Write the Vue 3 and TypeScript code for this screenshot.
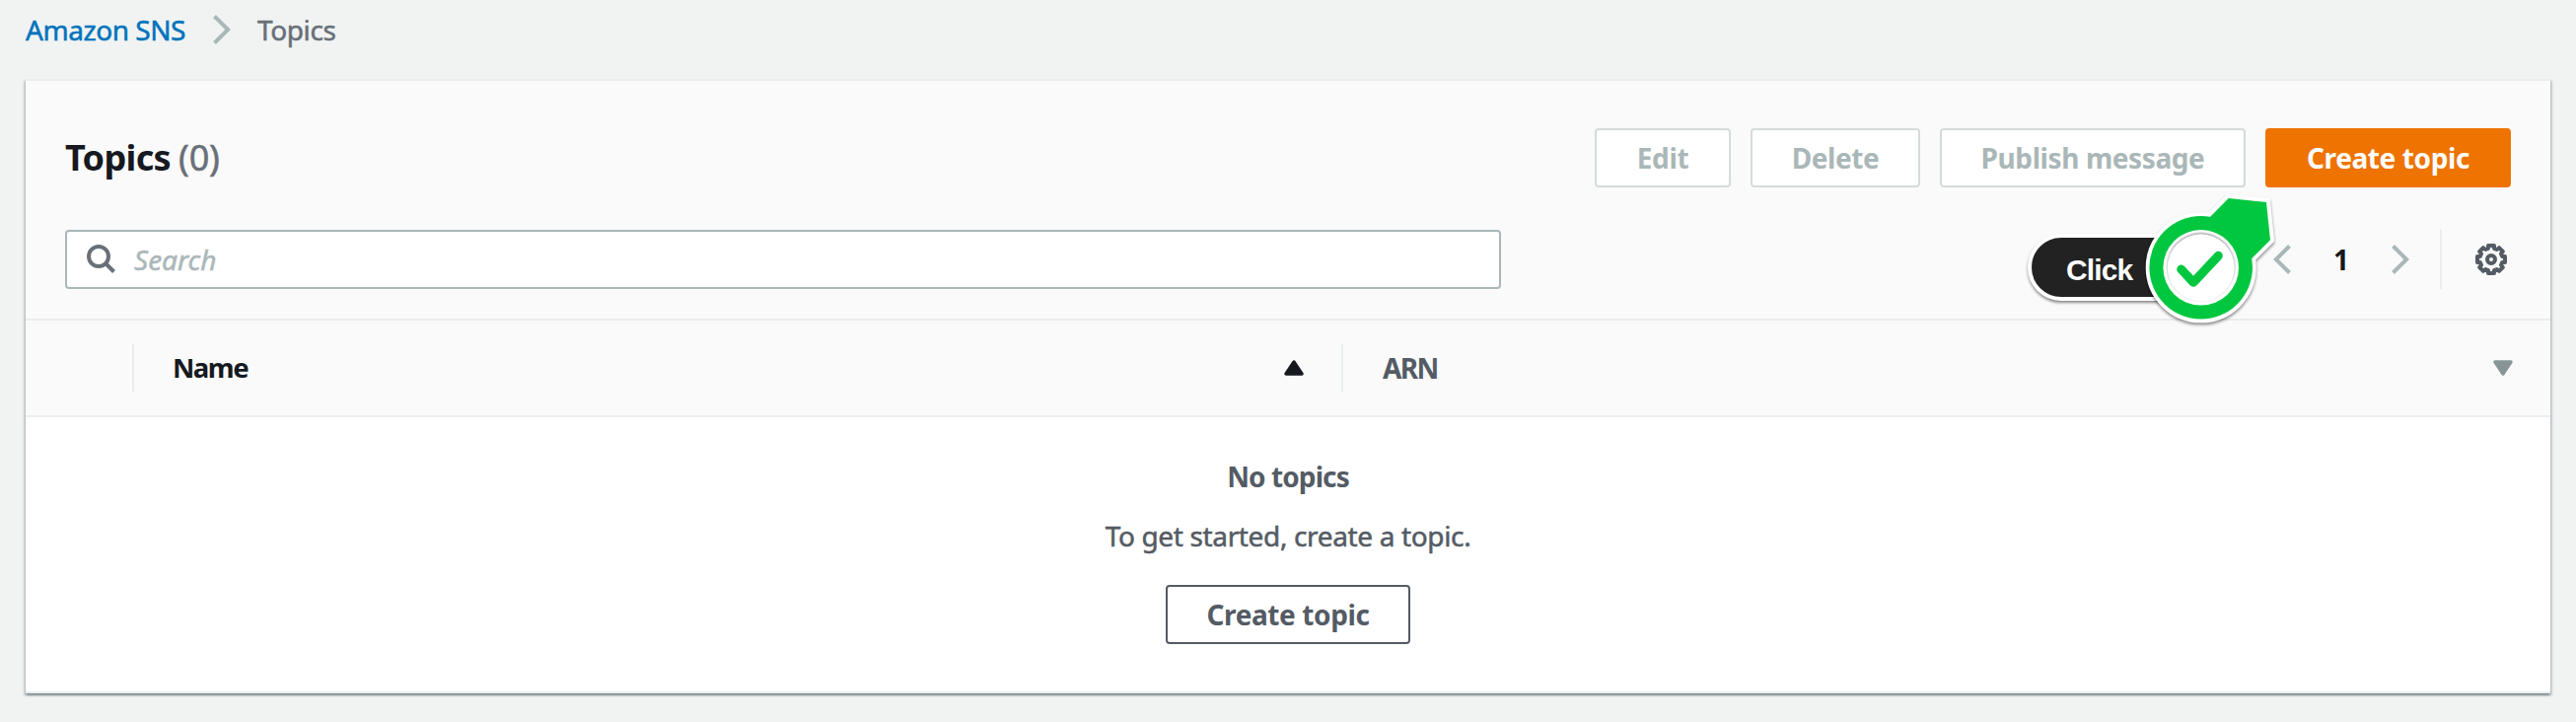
<script setup lang="ts">
interface Action {
  label: string
  kind: 'edit' | 'delete' | 'publish' | 'create'
}

const count = 0
const page = 1
const actions: Action[] = [
  { label: 'Edit', kind: 'edit' },
  { label: 'Delete', kind: 'delete' },
  { label: 'Publish message', kind: 'publish' },
  { label: 'Create topic', kind: 'create' },
]
</script>

<template>
  <main class="page">
    <nav class="breadcrumb">
      <a class="crumb-link">Amazon SNS</a>
      <svg class="crumb-chevron" viewBox="0 0 18 30"><path d="M1.5 1.5 15.2 15 1.5 28.5" /></svg>
      <span class="crumb-current">Topics</span>
    </nav>

    <section class="panel">
      <header class="panel-head">
        <div class="title-row">
          <h2 class="title">Topics</h2>
          <span class="count">({{ count }})</span>
          <div class="actions">
            <button v-for="a in actions" :key="a.kind" class="btn" :class="a.kind">{{ a.label }}</button>
          </div>
        </div>
        <div class="tools-row">
          <div class="search">
            <svg class="search-icon" viewBox="0 0 30 30">
              <circle cx="12" cy="12" r="10" />
              <path d="M19 19 27.5 27.5" />
            </svg>
            <span class="placeholder">Search</span>
          </div>
          <div class="pager">
            <svg class="chevron" viewBox="0 0 18 30"><path d="M16.5 1.5 2.8 15 16.5 28.5" /></svg>
            <span class="page-number">{{ page }}</span>
            <svg class="chevron" viewBox="0 0 18 30"><path d="M1.5 1.5 15.2 15 1.5 28.5" /></svg>
          </div>
          <div class="settings">
            <svg class="gear" viewBox="0 0 32 32">
              <path
                d="M13 2H19V4.8L21.8 6 24 4.2 27.8 8 26 10.2 27.2 13H30V19H27.2L26 21.8 27.8 24 24 27.8 21.8 26 19 27.2V30H13V27.2L10.2 26 8 27.8 4.2 24 6 21.8 4.8 19H2V13H4.8L6 10.2 4.2 8 8 4.2 10.2 6 13 4.8Z"
              />
              <circle cx="16" cy="16" r="4" />
            </svg>
          </div>
        </div>
      </header>

      <div class="columns">
        <div class="col select"></div>
        <div class="col name">
          <span class="name-label">Name</span>
          <svg class="sort" viewBox="0 0 20 16"><path d="M10 2 18 14H2Z" /></svg>
        </div>
        <div class="col arn">
          <span class="arn-label">ARN</span>
          <svg class="sort" viewBox="0 0 20 16"><path d="M2 2H18L10 14Z" /></svg>
        </div>
      </div>

      <div class="empty">
        <strong class="empty-title">No topics</strong>
        <p class="empty-text">To get started, create a topic.</p>
        <button class="btn outline">Create topic</button>
      </div>
    </section>

    <!-- Walkthrough marker floating over the toolbar -->
    <div class="marker">
      <div class="marker-label">Click</div>
      <svg class="marker-pin" viewBox="0 0 132 148">
        <g class="pin-outline">
          <circle cx="61.7" cy="81.3" r="52" />
          <path d="M71 30 89.7 11 128 15 132 53.3 112 73Z" />
        </g>
        <g class="pin-body">
          <circle cx="61.7" cy="81.3" r="52.3" />
          <path d="M69 32 89.7 11 128 15 132 53.3 112 73.3Z" />
        </g>
        <circle class="pin-ring" cx="61.7" cy="81.3" r="38.3" />
        <circle class="pin-disc" cx="61.7" cy="81.3" r="34" />
        <path class="pin-check" d="M41.7 83 54 96.3 79.3 69.3" />
      </svg>
    </div>
  </main>
</template>

<style>
body {
  background: #f1f3f3;
}
</style>

<style scoped>
.page {
  position: relative;
  box-sizing: border-box;
  height: 732px;
  padding: 0 26px;
  overflow: hidden;
  background: #f1f3f3;
  color: #545b64;
  font: 28px/60px 'Noto Sans', 'Open Sans', sans-serif;
}
.breadcrumb {
  display: flex;
  align-items: center;
  height: 60px;
}
.crumb-link,
.crumb-current,
.count,
.placeholder,
.empty-text {
  -webkit-text-stroke: 0.5px currentColor;
}
.crumb-link {
  width: 190px;
  color: #0073bb;
  letter-spacing: -0.45px;
}
.crumb-chevron,
.chevron {
  display: block;
  width: 18px;
  height: 30px;
  fill: none;
  stroke: #aab7b8;
  stroke-width: 4;
}
.crumb-current {
  margin-left: 27px;
  color: #687078;
  letter-spacing: -0.4px;
}
.panel {
  box-sizing: border-box;
  height: 623px;
  margin-top: 20px;
  border-top: 2px solid #eaeded;
  border-bottom: 2px solid #eaeded;
  background: #fff;
  box-shadow:
    0 2px 2px 0 rgba(0, 28, 36, 0.3),
    2px 2px 2px 0 rgba(0, 28, 36, 0.15),
    -2px 2px 2px 0 rgba(0, 28, 36, 0.15);
}
.panel-head {
  box-sizing: border-box;
  height: 243px;
  padding: 48px 40px 0;
  border-bottom: 2px solid #eaeded;
  background: #fafafa;
}
.title-row,
.tools-row {
  display: flex;
  align-items: center;
  height: 60px;
}
.tools-row {
  margin-top: 43px;
}
.title {
  margin: 0;
  color: #16191f;
  font-size: 36px;
  font-weight: 700;
  line-height: 60px;
  letter-spacing: -0.65px;
}
.count {
  margin-left: 8px;
  color: #687078;
  font-size: 36px;
  letter-spacing: -0.2px;
}
.actions {
  display: flex;
  gap: 20px;
  margin-left: auto;
}
.btn {
  box-sizing: border-box;
  height: 60px;
  padding: 0;
  border: 2px solid #d5dbdb;
  border-radius: 4px;
  background: #fff;
  color: #aab7b8;
  font: 700 28px/56px 'Noto Sans', 'Open Sans', sans-serif;
  letter-spacing: -0.4px;
  white-space: nowrap;
}
.edit {
  width: 138px;
}
.delete {
  width: 172px;
}
.publish {
  width: 310px;
}
.create {
  width: 249px;
  border-color: #ee7300;
  background: #ee7300;
  color: #fff;
}
.search {
  display: flex;
  align-items: center;
  box-sizing: border-box;
  width: 1456px;
  height: 60px;
  padding-left: 20px;
  border: 2px solid #aab7b8;
  border-radius: 4px;
  background: #fff;
}
.search-icon {
  width: 30px;
  height: 30px;
  fill: none;
  stroke: #687078;
  stroke-width: 4;
}
.placeholder {
  margin-left: 18px;
  color: #aab7b8;
  font-style: italic;
}
.pager {
  display: flex;
  align-items: center;
  justify-content: space-between;
  width: 138px;
  margin-left: auto;
}
.page-number {
  color: #16191f;
  font-weight: 700;
}
.settings {
  display: flex;
  align-items: center;
  justify-content: flex-end;
  box-sizing: border-box;
  width: 72px;
  height: 60px;
  margin-left: 31px;
  padding-right: 4px;
  border-left: 2px solid #eaeded;
}
.gear {
  width: 32px;
  height: 32px;
  fill: none;
  stroke: #545b64;
  stroke-width: 4;
  stroke-linejoin: round;
}
.columns {
  display: flex;
  align-items: center;
  box-sizing: border-box;
  height: 98px;
  border-bottom: 2px solid #eaeded;
  background: #fafafa;
  font-weight: 700;
}
.col {
  display: flex;
  align-items: center;
  justify-content: space-between;
  box-sizing: border-box;
  height: 48px;
  border-right: 2px solid #eaeded;
}
.select {
  width: 110px;
}
.name {
  width: 1226px;
  padding: 0 38px 0 39px;
  color: #16191f;
}
.name-label {
  font-size: 27.5px;
  letter-spacing: -1.5px;
}
.arn {
  flex: 1;
  padding: 0 38px 0 40px;
  border-right: none;
}
.arn-label {
  font-size: 28px;
  letter-spacing: -1.6px;
}
.sort {
  width: 20px;
  height: 16px;
  fill: #16191f;
  stroke: #16191f;
  stroke-width: 3.4;
  stroke-linejoin: round;
}
.arn .sort {
  fill: #879596;
  stroke: #879596;
}
.empty {
  display: flex;
  flex-direction: column;
  align-items: center;
  padding-top: 30px;
}
.empty-title {
  letter-spacing: -0.9px;
}
.empty-text {
  margin: 0;
  letter-spacing: -0.35px;
}
.outline {
  width: 248px;
  margin-top: 20px;
  border-color: #545b64;
  color: #545b64;
}
.marker {
  position: absolute;
  left: 2056px;
  top: 190px;
  width: 260px;
  height: 148px;
}
.marker-label {
  position: absolute;
  left: 0;
  top: 47px;
  box-sizing: border-box;
  width: 180px;
  height: 68px;
  padding-left: 35px;
  border: 4px solid #fff;
  border-radius: 34px;
  background: #222;
  box-shadow: 0 2px 3px rgba(0, 0, 0, 0.45);
  color: #fff;
  font: 700 30px/65px 'Liberation Sans', Arial, sans-serif;
  letter-spacing: -0.9px;
}
.marker-pin {
  position: absolute;
  left: 114px;
  top: 0;
  width: 132px;
  height: 148px;
  overflow: visible;
}
.pin-outline {
  fill: #fff;
  stroke: #fff;
  stroke-width: 8;
  filter: drop-shadow(0 2px 1.5px rgba(0, 0, 0, 0.45));
}
.pin-body {
  fill: #00c73f;
}
.pin-ring {
  fill: #fff;
}
.pin-disc {
  fill: #fff;
  filter: drop-shadow(0 -1px 1px rgba(0, 0, 0, 0.45));
}
.pin-check {
  fill: none;
  stroke: #00c73f;
  stroke-width: 9;
  stroke-linecap: round;
  stroke-linejoin: round;
}
</style>
